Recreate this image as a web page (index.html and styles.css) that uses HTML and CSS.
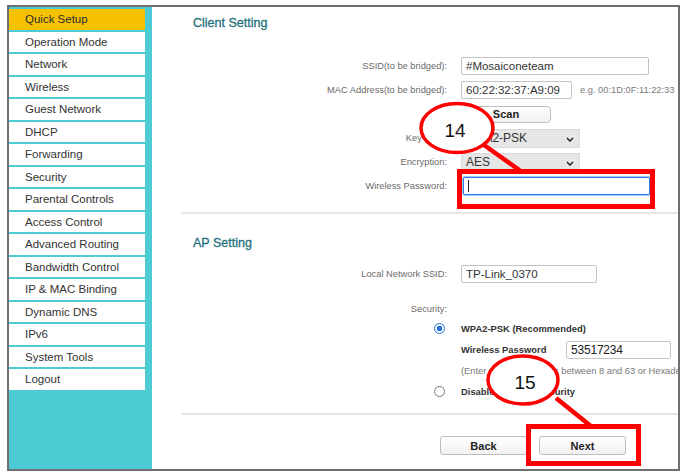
FILE: index.html
```html
<!DOCTYPE html>
<html>
<head>
<meta charset="utf-8">
<link rel="stylesheet" href="styles.css">
</head>
<body>
<div class="frame">
  <nav class="sidebar">
    <div class="item active">Quick Setup</div>
    <div class="item">Operation Mode</div>
    <div class="item">Network</div>
    <div class="item">Wireless</div>
    <div class="item">Guest Network</div>
    <div class="item">DHCP</div>
    <div class="item">Forwarding</div>
    <div class="item">Security</div>
    <div class="item">Parental Controls</div>
    <div class="item">Access Control</div>
    <div class="item">Advanced Routing</div>
    <div class="item">Bandwidth Control</div>
    <div class="item">IP &amp; MAC Binding</div>
    <div class="item">Dynamic DNS</div>
    <div class="item">IPv6</div>
    <div class="item">System Tools</div>
    <div class="item">Logout</div>
  </nav>
  <main class="content">
    <h2 class="title first">Client Setting</h2>
    <div class="form client">
      <div class="row"><span class="label">SSID(to be bridged):</span><div class="field w-ssid">#Mosaiconeteam</div></div>
      <div class="row"><span class="label">MAC Address(to be bridged):</span><div class="inline"><div class="field w-mac">60:22:32:37:A9:09</div><span class="hint">e.g. 00:1D:0F:11:22:33</span></div></div>
      <div class="row"><span class="label"></span><div class="btn scan">Scan</div></div>
      <div class="row"><span class="label">Key Type:</span><div class="select">WPA2-PSK<svg class="chev" viewBox="0 0 8 5" width="8" height="5"><path d="M1 1 L4 4 L7 1" fill="none" stroke="#222" stroke-width="1.5"/></svg></div></div>
      <div class="row"><span class="label">Encryption:</span><div class="select">AES<svg class="chev" viewBox="0 0 8 5" width="8" height="5"><path d="M1 1 L4 4 L7 1" fill="none" stroke="#222" stroke-width="1.5"/></svg></div></div>
      <div class="row"><span class="label">Wireless Password:</span><div class="field w-pwd focus"><span class="caret"></span></div></div>
    </div>
    <div class="sep sep1"></div>
    <h2 class="title second">AP Setting</h2>
    <div class="form ap">
      <div class="row"><span class="label">Local Network SSID:</span><div class="field w-local">TP-Link_0370</div></div>
      <div class="row sec"><span class="label">Security:</span><span></span></div>
      <div class="rrow"><span class="radio on"></span><span class="strong">WPA2-PSK (Recommended)</span></div>
      <div class="rrow"><span></span><div class="inline"><span class="strong pwlabel">Wireless Password</span><div class="field w-appwd">53517234</div></div></div>
      <div class="rrow"><span></span><span class="note">(Enter ASCII characters between 8 and 63 or Hexadecimal characters between 8 and 64.)</span></div>
      <div class="rrow"><span class="radio"></span><span class="strong">Disable Wireless Security</span></div>
    </div>
    <div class="sep sep2"></div>
    <div class="buttons">
      <div class="btn nav">Back</div>
      <div class="btn nav">Next</div>
    </div>
  </main>
</div>
<svg class="overlay" width="688" height="476" viewBox="0 0 688 476">
  <line x1="484" y1="145" x2="522" y2="172" stroke="#f00" stroke-width="4.5"/>
  <ellipse cx="457" cy="128" rx="36" ry="24.5" fill="#fff" stroke="#f00" stroke-width="3.5"/>
  <text x="455" y="137" text-anchor="middle" class="num">14</text>
  <rect x="459.5" y="171.5" width="193" height="35" fill="none" stroke="#f00" stroke-width="5"/>
  <line x1="556" y1="398" x2="592" y2="427" stroke="#f00" stroke-width="4.5"/>
  <ellipse cx="523" cy="380" rx="35" ry="24" fill="#fff" stroke="#f00" stroke-width="3.5"/>
  <text x="525" y="389" text-anchor="middle" class="num">15</text>
  <rect x="528.5" y="426.5" width="110" height="37" fill="none" stroke="#f00" stroke-width="5"/>
</svg>
</body>
</html>
```

FILE: styles.css
```css
html, body {
  margin: 0;
  padding: 0;
  background: #ffffff;
  font-family: "Liberation Sans", Arial, sans-serif;
}
body {
  width: 688px;
  height: 476px;
  position: relative;
  overflow: hidden;
}
.frame {
  box-sizing: border-box;
  margin: 5px 0 0 7px;
  width: 673px;
  height: 466px;
  border: 2px solid #6f6f6f;
  display: flex;
}
.sidebar {
  width: 143px;
  flex: none;
  background: #4ccbd5;
  padding: 2px 7px 0 0;
  box-sizing: border-box;
  display: flex;
  flex-direction: column;
  gap: 2px;
}
.item {
  height: 20.5px;
  background: #ffffff;
  font-size: 11.5px;
  color: #333333;
  padding-left: 16px;
  display: flex;
  align-items: center;
}
.item.active {
  background: #f6c200;
  color: #2a2a2a;
}
.content {
  flex: 1;
  position: relative;
  overflow: hidden;
  padding-left: 29px;
  white-space: nowrap;
}
.title {
  margin: 0;
  padding-left: 12px;
  font-size: 12.5px;
  line-height: 16px;
  font-weight: normal;
  color: #23707c;
  -webkit-text-stroke: 0.3px #23707c;
}
.title.first { margin-top: 8px; }
.title.second { margin-top: 21px; }
.form {
  display: grid;
  grid-template-columns: 266px 1fr;
  column-gap: 14px;
}
.form.client { margin-top: 23px; }
.form.ap { margin-top: 11px; }
.row {
  display: contents;
}
.row > *, .rrow > * {
  align-self: center;
}
.form.client > .row > *, .form.ap > .row > * {
  height: 24px;
  display: flex;
  align-items: center;
}
.label {
  justify-content: flex-end;
  font-size: 9.3px;
  color: #6a6a6a;
}
.row.sec > * {
  height: 18px !important;
  margin-top: 14px;
}
.rrow {
  display: contents;
}
.rrow > * {
  height: 21px;
  display: flex;
  align-items: center;
}
.inline {
  display: flex;
  align-items: center;
}
.field {
  box-sizing: border-box;
  border: 1px solid #c4c4c4;
  border-radius: 2px;
  background: #fff;
  font-size: 11.5px;
  color: #333;
  padding-left: 4px;
  display: flex;
  align-items: center;
}
.form .row > .field, .form .inline > .field { height: 18px !important; }
.w-ssid { width: 188px; }
.w-mac { width: 111px; }
.w-pwd { width: 187px; margin-left: 2px; }
.w-local { width: 136px; }
.w-appwd { width: 105px; font-size: 12px; color: #222; letter-spacing: -0.2px; }
.focus {
  border: 1px solid #2f7fe0;
  box-shadow: 0 0 0 1px #9cc3f2;
  height: 19px !important;
}
.caret {
  width: 1px;
  height: 12px;
  background: #222;
}
.hint {
  margin-left: 8px;
  font-size: 9.3px;
  color: #7a7a7a;
}
.btn {
  box-sizing: border-box;
  border: 1px solid #bdbdbd;
  border-radius: 4px;
  background: linear-gradient(#ffffff, #f1f1f1);
  font-size: 11px;
  font-weight: bold;
  color: #222;
  display: flex;
  align-items: center;
  justify-content: center;
}
.form .row > .btn.scan { width: 90px; height: 17px !important; }
.select {
  box-sizing: border-box;
  width: 119px;
  height: 19px !important;
  background: #e6e6e6;
  border: 1px solid #dadada;
  font-size: 12px;
  color: #333;
  padding-left: 4px;
  position: relative;
}
.chev {
  position: absolute;
  right: 5px;
  top: 7px;
}
.radio {
  justify-self: end;
  margin-right: 2px;
  box-sizing: border-box;
  width: 11px;
  height: 11px !important;
  border-radius: 50%;
  border: 1.5px solid #777;
  background: #fff;
}
.radio.on {
  border: 1.5px solid #1f6fe5;
  background: radial-gradient(circle, #1f6fe5 0 2.6px, #fff 3px);
}
.strong {
  font-size: 9.4px;
  font-weight: bold;
  color: #333;
}
.pwlabel { width: 105px; }
.note {
  font-size: 9.3px;
  color: #777;
}
.sep {
  height: 2px;
  background: #e6e6e6;
}
.sep1 { margin-top: 14px; }
.sep2 { margin-top: 11px; }
.buttons {
  margin-top: 21px;
  padding-left: 259px;
  display: flex;
  gap: 12px;
}
.btn.nav {
  width: 87px;
  height: 19px;
  border-radius: 3px;
}
.overlay {
  position: absolute;
  left: 0;
  top: 0;
  pointer-events: none;
}
.num {
  font-family: "Liberation Sans", Arial, sans-serif;
  font-size: 19px;
  fill: #111;
}
```
